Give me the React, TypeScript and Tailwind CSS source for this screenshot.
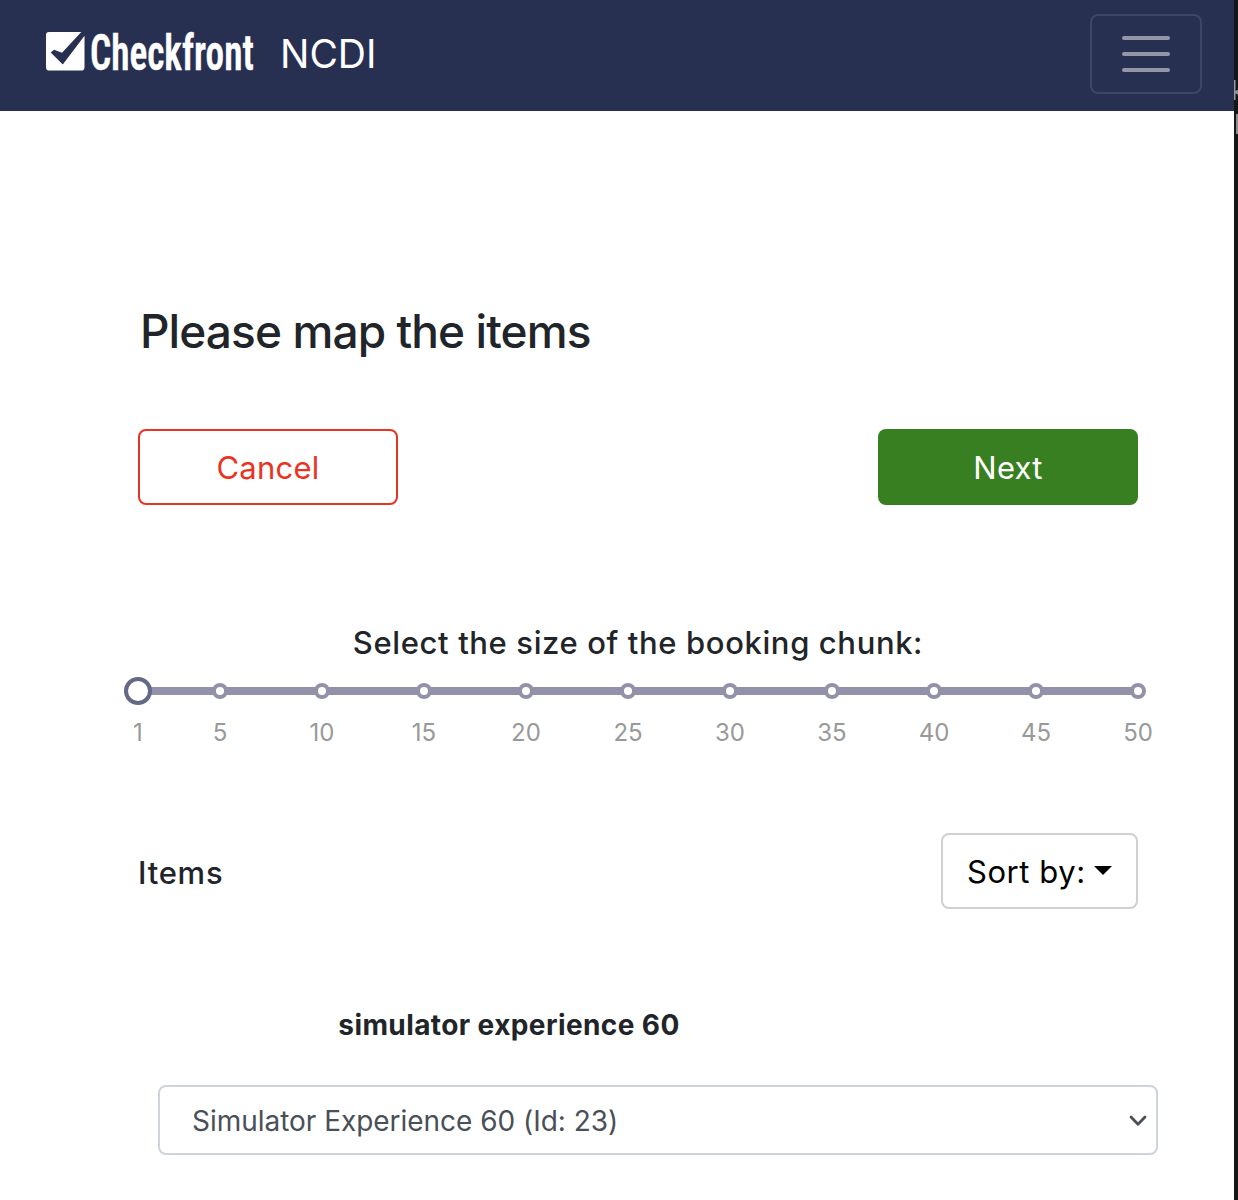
import React from "react";

const steps = [1, 5, 10, 15, 20, 25, 30, 35, 40, 45, 50];

function Logo() {
  return (
    <div className="flex h-[50px] w-[212px]">
      <svg className="block h-[50px] w-[44px] shrink-0" viewBox="0 0 44 50" aria-hidden="true">
        <path
          fill="#fff"
          d="M3 6H35.3L16 26.7L8 23.8L4.7 26.4L16.8 38.5L38.5 9.8V41.2Q38.5 44.6 35.3 44.6H3.4Q0 44.6 0 41.2V9.2Q0 6 3 6Z"
        />
      </svg>
      <span className="h-[50px] w-[168px] origin-left scale-x-[0.745] whitespace-nowrap pt-[2px] font-['Roboto',sans-serif] text-[50px] font-semibold leading-[50px] text-white [-webkit-text-stroke:0.4px_white] [font-stretch:75%]">
        Checkfront
      </span>
    </div>
  );
}

function Header() {
  return (
    <header className="flex h-[111px] items-start justify-between bg-[#283052] pl-[46px] pr-8">
      <div className="flex items-start pt-[26px]">
        <Logo />
        <span className="ml-[22px] pt-[3px] text-[39px] leading-[50px] text-white">NCDI</span>
      </div>
      <button
        aria-label="Menu"
        className="mt-3.5 flex h-20 w-28 flex-col items-center justify-center gap-3 rounded-lg border-2 border-[#3f4665]"
      >
        <span className="h-1 w-12 rounded-full bg-[#9497a8]" />
        <span className="h-1 w-12 rounded-full bg-[#9497a8]" />
        <span className="h-1 w-12 rounded-full bg-[#9497a8]" />
      </button>
    </header>
  );
}

function ChunkSlider() {
  return (
    <div className="relative h-[70px] w-full">
      <div className="absolute inset-x-0 top-[10px] h-2 bg-[#9391a9]" />
      {steps.map((n, i) => (
        <div
          key={n}
          className="absolute top-0 flex w-10 -translate-x-1/2 flex-col items-center"
          style={{ left: `${Math.round(((n - 1) / 49) * 500) * 2}px` }}
        >
          <span className="flex h-7 items-center">
            {i === 0 ? (
              <span className="size-7 rounded-full border-4 border-[#646a86] bg-white" />
            ) : (
              <span className="size-4 rounded-full border-4 border-[#9391a9] bg-white" />
            )}
          </span>
          <span className="mt-[13px] text-2xl leading-[30px] text-[#999]">{n}</span>
        </div>
      ))}
    </div>
  );
}

export default function App() {
  return (
    <div className="flex h-[1200px] w-[1238px] overflow-hidden bg-white font-['Inter',sans-serif] text-[#212529]">
      <div className="w-[1234px] shrink-0">
        <Header />
        <main className="ml-[138px] flex w-[1000px] flex-col">
          <h1 className="mt-[191px] ml-[2px] h-[58px] whitespace-nowrap text-[46px] font-medium leading-[58px] tracking-[-0.9px]">
            Please map the items
          </h1>
          <div className="mt-[69px] flex justify-between text-[31px] tracking-[0.25px]">
            <button className="h-[76px] w-[260px] rounded-lg border-2 border-[#e93323] pt-[3px] text-[#e93323]">Cancel</button>
            <button className="h-[76px] w-[260px] rounded-lg bg-[#377f21] pt-[3px] text-white">Next</button>
          </div>
          <p className="mt-[118px] h-10 whitespace-nowrap text-center text-[31px] font-medium leading-10 tracking-[0.62px]">
            Select the size of the booking chunk:
          </p>
          <div className="mt-[14px]">
            <ChunkSlider />
          </div>
          <div className="mt-[86px] flex h-[76px] items-center justify-between">
            <span className="pt-1 text-[31px] font-medium tracking-[0.75px]">Items</span>
            <button className="flex h-[76px] w-[197px] items-center rounded-lg border-2 border-[#d0d0d0] pl-6 text-[31px] tracking-[0.55px] text-black">
              <span className="whitespace-nowrap pt-[3px]">Sort by:</span>
              <svg className="mb-px ml-2 h-[9px] w-[18px]" viewBox="0 0 18 9">
                <path d="M0 0H18L9 9Z" fill="#000" />
              </svg>
            </button>
          </div>
          <div className="ml-5 mt-[98px] h-9 w-[702px] whitespace-nowrap text-center text-[28px] font-bold leading-9 tracking-[0.4px]">
            simulator experience 60
          </div>
          <div className="ml-5 mt-[42px] flex h-[70px] w-[1000px] items-center justify-between rounded-lg border-2 border-[#ced4da] pl-8 pr-[9px] text-[28px] tracking-[-0.03px] text-[#495057]">
            <span className="whitespace-nowrap pt-[2px]">Simulator Experience 60 (Id: 23)</span>
            <svg className="mt-[2px] h-3 w-[18px]" viewBox="0 0 18 12" fill="none">
              <path d="M2 2L9 9.3L16 2" stroke="#495057" strokeWidth="2.8" strokeLinecap="round" strokeLinejoin="round" />
            </svg>
          </div>
        </main>
      </div>
      <aside className="w-1 shrink-0 overflow-hidden bg-[#151717] pt-20">
        <svg className="block h-5 w-1" viewBox="0 0 4 20" fill="none">
          <path d="M0.5 0V20M1 12.5L4 10.5M2 12L4 14" stroke="#999" strokeWidth="2" />
        </svg>
        <div className="ml-0.5 mt-3.5 h-5 w-0.5 bg-[#8e8e8e]" />
      </aside>
    </div>
  );
}
